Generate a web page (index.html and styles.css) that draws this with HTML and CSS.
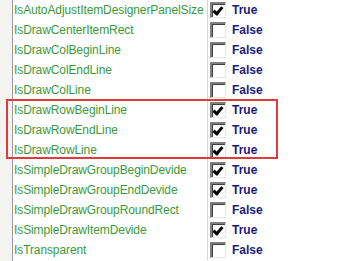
FILE: index.html
```html
<!DOCTYPE html>
<html lang="en">
<head>
    <meta charset="UTF-8">
    <title>Properties</title>
    <link rel="stylesheet" href="styles.css">
</head>
<body>
    <div id="grid">
        <div class="row"><div class="name">IsAutoAdjustItemDesignerPanelSize</div><div class="value"><span class="box checked"></span><span class="val">True</span></div></div>
        <div class="row"><div class="name">IsDrawCenterItemRect</div><div class="value"><span class="box"></span><span class="val">False</span></div></div>
        <div class="row"><div class="name">IsDrawColBeginLine</div><div class="value"><span class="box"></span><span class="val">False</span></div></div>
        <div class="row"><div class="name">IsDrawColEndLine</div><div class="value"><span class="box"></span><span class="val">False</span></div></div>
        <div class="row"><div class="name">IsDrawColLine</div><div class="value"><span class="box"></span><span class="val">False</span></div></div>
        <div class="row"><div class="name">IsDrawRowBeginLine</div><div class="value"><span class="box checked"></span><span class="val">True</span></div></div>
        <div class="row"><div class="name">IsDrawRowEndLine</div><div class="value"><span class="box checked"></span><span class="val">True</span></div></div>
        <div class="row"><div class="name">IsDrawRowLine</div><div class="value"><span class="box checked"></span><span class="val">True</span></div></div>
        <div class="row"><div class="name">IsSimpleDrawGroupBeginDevide</div><div class="value"><span class="box checked"></span><span class="val">True</span></div></div>
        <div class="row"><div class="name">IsSimpleDrawGroupEndDevide</div><div class="value"><span class="box checked"></span><span class="val">True</span></div></div>
        <div class="row"><div class="name">IsSimpleDrawGroupRoundRect</div><div class="value"><span class="box"></span><span class="val">False</span></div></div>
        <div class="row"><div class="name">IsSimpleDrawItemDevide</div><div class="value"><span class="box checked"></span><span class="val">True</span></div></div>
        <div class="row"><div class="name">IsTransparent</div><div class="value"><span class="box"></span><span class="val">False</span></div></div>
        <!-- highlight around the row line settings -->
        <div class="mark"></div>
    </div>
</body>
</html>
```

FILE: styles.css
```css
body {
    margin: 0;
    background-color: #fff;
}
#grid {
    position: relative;
    width: 340px;
    height: 261px;
    overflow: hidden;
    background: linear-gradient(to right, #f3f3ef 0, #f3f3ef 12px, #9a9a9a 12px, #9a9a9a 13px, #fff 13px);
}
.row {
    display: flex;
    height: 20px;
}
.name {
    width: 208px;
    padding-left: 14px;
    box-sizing: border-box;
    flex: none;
    border-right: 1px solid #d4d4d4;
    font-family: "Liberation Sans", Arial, sans-serif;
    font-size: 12px;
    letter-spacing: -0.1px;
    line-height: 20px;
    color: #3a9a3a;
    white-space: nowrap;
    overflow: hidden;
}
.value {
    display: flex;
    align-items: center;
    padding-left: 2px;
}
.box {
    position: relative;
    width: 16px;
    height: 16px;
    box-sizing: border-box;
    border-top: 2px solid #808080;
    border-left: 2px solid #808080;
    border-bottom: 1px solid #e6e6e6;
    border-right: 1px solid #e6e6e6;
    box-shadow: inset 1px 1px 0 #404040;
    background-color: #fff;
}
.box.checked::after {
    content: "";
    position: absolute;
    left: 3px;
    top: 1px;
    width: 3px;
    height: 7px;
    border-right: 3px solid #000;
    border-bottom: 3px solid #000;
    transform: rotate(40deg);
}
.val {
    margin-left: 6px;
    font-family: "Liberation Sans", Arial, sans-serif;
    font-size: 12px;
    font-weight: bold;
    color: #1b1b7a;
}
.mark {
    position: absolute;
    left: 6px;
    top: 99px;
    width: 272px;
    height: 60px;
    box-sizing: border-box;
    border: 2px solid #e0393f;
}
```
